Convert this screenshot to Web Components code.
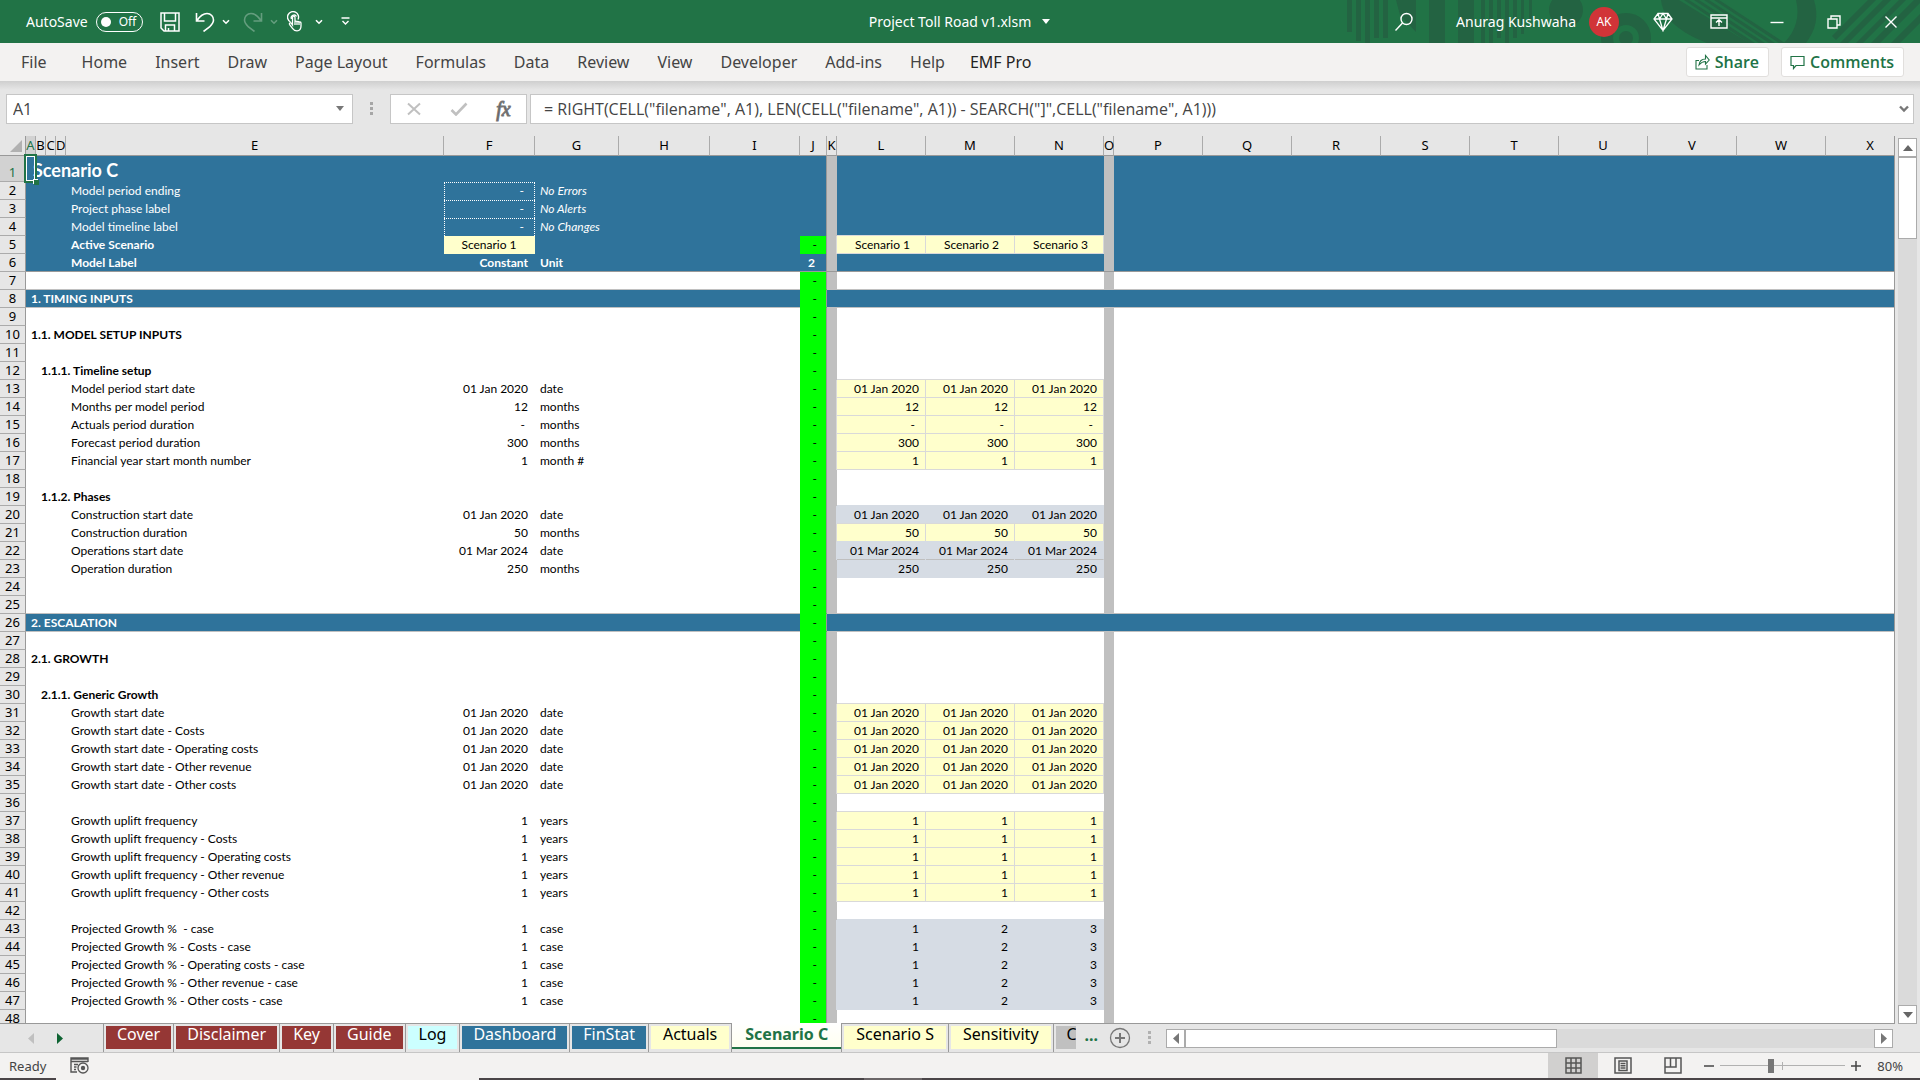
<!DOCTYPE html>
<html lang="en">
<head>
<meta charset="utf-8">
<title>Project Toll Road v1.xlsm</title>
<style>
  body {
    margin: 0;
    height: 100vh;
    display: flex;
    flex-direction: column;
    overflow: hidden;
    background: #e6e6e6;
    color: #444;
    font-family: "Noto Sans", "Open Sans", sans-serif;
    font-size: 16px;
  }
  xl-grid { flex: 1; min-height: 0; }
</style>
</head>
<body>
  <xl-title-bar user="Anurag Kushwaha" initials="AK">Project Toll Road v1.xlsm</xl-title-bar>

  <xl-ribbon>
    <xl-ribbon-tab class="file">File</xl-ribbon-tab>
    <xl-ribbon-tab>Home</xl-ribbon-tab>
    <xl-ribbon-tab>Insert</xl-ribbon-tab>
    <xl-ribbon-tab>Draw</xl-ribbon-tab>
    <xl-ribbon-tab>Page Layout</xl-ribbon-tab>
    <xl-ribbon-tab>Formulas</xl-ribbon-tab>
    <xl-ribbon-tab>Data</xl-ribbon-tab>
    <xl-ribbon-tab>Review</xl-ribbon-tab>
    <xl-ribbon-tab>View</xl-ribbon-tab>
    <xl-ribbon-tab>Developer</xl-ribbon-tab>
    <xl-ribbon-tab>Add-ins</xl-ribbon-tab>
    <xl-ribbon-tab>Help</xl-ribbon-tab>
    <xl-ribbon-tab addin>EMF Pro</xl-ribbon-tab>
    <xl-action slot="actions" icon="share">Share</xl-action>
    <xl-action slot="actions" icon="comment">Comments</xl-action>
  </xl-ribbon>

  <xl-formula-bar></xl-formula-bar>
  <xl-grid></xl-grid>

  <xl-sheet-tabs>
    <xl-sheet-tab tone="red">Cover</xl-sheet-tab>
    <xl-sheet-tab tone="red">Disclaimer</xl-sheet-tab>
    <xl-sheet-tab tone="red">Key</xl-sheet-tab>
    <xl-sheet-tab tone="red">Guide</xl-sheet-tab>
    <xl-sheet-tab tone="cyan">Log</xl-sheet-tab>
    <xl-sheet-tab tone="blue">Dashboard</xl-sheet-tab>
    <xl-sheet-tab tone="blue">FinStat</xl-sheet-tab>
    <xl-sheet-tab tone="yellow">Actuals</xl-sheet-tab>
    <xl-sheet-tab active>Scenario C</xl-sheet-tab>
    <xl-sheet-tab tone="yellow">Scenario S</xl-sheet-tab>
    <xl-sheet-tab tone="yellow">Sensitivity</xl-sheet-tab>
    <xl-sheet-tab tone="grey" cut>C</xl-sheet-tab>
  </xl-sheet-tabs>

  <xl-status-bar>Ready</xl-status-bar>

<script>
  // width, height, markup
  const ICONS = {
    save: [20, 20, '<path d="M1 1h18v18H4l-3-3zM4.500 1v8h11V1M5.500 19v-6h9v6M8.500 16v3" stroke-width="1.500"/>'],
    undo: [20, 20, '<path d="M1.500 1v8h8M2 8.500C5 4 8 1.500 12 1.500c4 0 6.500 3 6.500 6.500 0 3-2 5-4 7L8.500 19.500" stroke-width="1.600"/>'],
    redo: [20, 20, '<path d="M18.500 1v8h-8M18 8.500C15 4 12 1.500 8 1.500 4 1.500 1.500 4.500 1.500 8c0 3 2 5 4 7l6 4.500" stroke-width="1.600"/>'],
    chevron: [8, 6, '<path d="M1 1.200l3 3 3-3" stroke-width="1.600"/>'],
    customize: [9, 9, '<path d="M.500 1h8M1.500 4l3 3 3-3" stroke-width="1.400"/>'],
    touch: [16, 21, '<path d="M3.500 11A5.500 5.500 0 1 1 11 8.500M4.500 8A2.800 2.800 0 0 1 9.500 5.500" stroke-width="1.400"/><path d="M5.500 14V6.500c0-1.800 2.500-1.800 2.500 0V11c0-1.300 2-1.300 2 0 0-1 2-1 2 .500 0-1 2-.800 2 .500V15c0 3-1.500 4.800-4 4.800-2.500 0-3.500-1-4.500-2.500l-3-4c-.500-1.200.700-2 1.700-1.200zM8 11v3M10 11v3M12 11.500v2.500" stroke-width="1.300"/>'],
    search: [20, 20, '<circle cx="12.500" cy="7" r="5.500" stroke-width="1.400"/><path d="M8.500 11L1.500 18.500" stroke-width="1.400"/>'],
    diamond: [20, 20, '<path d="M5 1.500h10l4 5.500-9 11.500L1 7zM1 7h18M5 1.500L6.500 7 10 18.500 13.500 7 15 1.500M6.500 7L10 1.500 13.500 7" stroke-width="1.300"/>'],
    display: [18, 15, '<path d="M1 1h16v13H1zM1 4h16M9 12V6M6 8.500L9 5.700l3 2.800" stroke-width="1.400"/>'],
    minimize: [14, 14, '<path d="M.500 7.500h13" stroke-width="1.400"/>'],
    restore: [14, 14, '<path d="M1 4h9v9H1zM4 4V1h9v9h-3" stroke-width="1.400"/>'],
    close: [14, 14, '<path d="M1.500 1.500l11 11M12.500 1.500l-11 11" stroke-width="1.400"/>'],
    share: [15, 16, '<path d="M4 6.500H1v8.500h11v-4M4 11c.500-4 3-6 6.500-6V1.500L14.200 6l-3.700 4V7.500C8 7.500 6 8.500 4 11z" stroke-width="1.100"/>'],
    comment: [15, 15, '<path d="M1 1.500h13v9H6L3.500 13.500v-3H1z" stroke-width="1.200"/>'],
    caret: [10, 6, '<path d="M1 0h8L5 5z" fill="currentColor" stroke="none"/>'],
    dots: [3, 14, '<path d="M0 0h3v3H0zM0 5h3v3H0zM0 10h3v3H0z" fill="currentColor" stroke="none"/>'],
    cancel: [16, 14, '<path d="M2 1.500l12 11M14 1.500L2 12.500" stroke-width="2"/>'],
    enter: [18, 14, '<path d="M1.500 8L6 12.500 16.500 1.500" stroke-width="2.600"/>'],
    expand: [10, 8, '<path d="M1 1.500L5 5.500l4-4" stroke-width="2.400"/>'],
    up: [10, 6, '<path d="M0 6h10L5 0z" fill="currentColor" stroke="none"/>'],
    down: [10, 6, '<path d="M0 0h10L5 6z" fill="currentColor" stroke="none"/>'],
    left: [6, 11, '<path d="M6 0v11L0 5.500z" fill="currentColor" stroke="none"/>'],
    right: [6, 11, '<path d="M0 0v11l6-5.500z" fill="currentColor" stroke="none"/>'],
    add: [22, 22, '<circle cx="11" cy="11" r="9.500" stroke-width="1.300"/><path d="M11 6v10M6 11h10" stroke-width="2"/>'],
    macro: [20, 17, '<path d="M18 5V1H1v14h6M1 4.500h17M1 2h17M4 7.500h4M4 10h2.500M4 12.500h2" stroke-width="1.400"/><circle cx="13" cy="11" r="5" stroke-width="1.300"/><circle cx="13" cy="11" r="2.200" fill="currentColor" stroke="none"/>'],
    normal: [17, 17, '<path d="M1 1h15v15H1zM6 1v15M11 1v15M1 6h15M1 11h15" stroke-width="1.500"/>'],
    layout: [18, 17, '<path d="M1 1h16v15H1zM5 4h8v9.500H5zM6.500 6.500h5M6.500 8.700h5M6.500 11h5" stroke-width="1.500"/>'],
    breaks: [18, 17, '<path d="M1 1h16v15H1zM6.500 1v9M1 10h11V1" stroke-width="1.500"/>'],
    minus: [10, 10, '<path d="M0 5h10" stroke-width="1.500"/>'],
    plus: [10, 10, '<path d="M0 5h10M5 0v10" stroke-width="1.500"/>']
  };

  class XlIcon extends HTMLElement {
    connectedCallback() {
      const [w, h, shape] = ICONS[this.getAttribute('name')];
      this.attachShadow({ mode: 'open' });
      this.shadowRoot.innerHTML = `
        <style>
          :host { display: inline-flex; flex: none; }
          svg { display: block; fill: none; stroke: currentColor; }
        </style>
        <svg width="${w}" height="${h}" viewBox="0 0 ${w} ${h}" aria-hidden="true">${shape}</svg>
      `;
    }
  }

  class XlTitleBar extends HTMLElement {
    connectedCallback() {
      this.attachShadow({ mode: 'open' });
      this.shadowRoot.innerHTML = `
        <style>
          :host {
            display: grid;
            grid-template-columns: 1fr auto 1fr;
            align-items: center;
            position: relative;
            height: 43px;
            background: #217346;
            color: #fff;
            font-size: 14px;
          }
          button {
            display: flex;
            align-items: center;
            justify-content: center;
            padding: 0;
            border: 0;
            background: none;
            color: inherit;
            font: inherit;
          }
          .art { position: absolute; right: 0; top: 0; height: 43px; }
          .quick, .account, .doc { display: flex; align-items: center; position: relative; }
          .quick { padding-left: 26px; }
          .switch { display: flex; align-items: center; gap: 8px; }
          .pill {
            box-sizing: border-box;
            display: flex;
            align-items: center;
            gap: 8px;
            width: 47px;
            height: 20px;
            padding-left: 4px;
            border: 1px solid #fff;
            border-radius: 10px;
            font-size: 12px;
          }
          .pill::before { content: ''; width: 10px; height: 10px; border-radius: 50%; background: #fff; }
          .save { margin: 0 15px 0 17px; }
          .history { gap: 7px; margin-right: 13px; }
          .touch { gap: 12px; margin: 0 18px 0 -4px; }
          .off { opacity: .3; }
          .doc { gap: 10px; }
          .account { justify-content: flex-end; padding-right: 1px; }
          .avatar {
            width: 30px;
            line-height: 30px;
            margin: 0 34px 0 13px;
            border-radius: 50%;
            background: #d13438;
            font-size: 12px;
            text-align: center;
          }
          .search { margin-right: 42px; }
          .gem { margin-right: 37px; }
          .display { margin-right: 20px; }
          .window { width: 57px; }
        </style>
        <svg class="art" width="580" height="43" viewBox="0 0 580 43" fill="#236342" aria-hidden="true">
          <path d="M7 0h5v32H7zM16 0h5v41h-5zM25 0h5v43h-5zM34 0h5v38h-5zM43 0h5v38h-5zM56 0h20v32L60 15zM89 0h16v43H89zM118 0h16v43h-16zM141 0h4v43h-4zM149 0h4v43h-4zM157 0h4v38h-4zM165 0h4v43h-4zM173 0h4v38h-4zM181 0h3v34h-3zM189 0h3v20h-3z"/>
          <circle cx="226" cy="10" r="17"/>
          <circle cx="286" cy="38" r="19" fill="none" stroke="#236342" stroke-width="12"/>
          <circle cx="286" cy="38" r="7"/>
          <path d="M321 0h18l70 43h-42c-26-10-44-24-46-43z"/>
          <path d="M344 0h5l66 43h-6zM354 0h5l66 43h-6zM364 0h5l66 43h-6zM374 0h5l66 43h-6z"/>
          <path d="M456 0h18c5 16 2 30-8 43h-22c12-12 16-27 12-43zM492 36L528 0h8l-40 40zM500 43L543 0h8l-43 43zM516 43L559 0h7l-43 43zM531 43L574 0h6v3l-40 40zM551 43l29-29v9l-20 20z"/>
        </svg>
        <div class="quick">
          <button class="switch" role="switch" aria-checked="false">AutoSave <span class="pill">Off</span></button>
          <button class="save" aria-label="Save"><xl-icon name="save"></xl-icon></button>
          <button class="history" aria-label="Undo"><xl-icon name="undo"></xl-icon><xl-icon name="chevron"></xl-icon></button>
          <button class="history off" aria-label="Redo"><xl-icon name="redo"></xl-icon><xl-icon name="chevron"></xl-icon></button>
          <button class="touch" aria-label="Touch mode"><xl-icon name="touch"></xl-icon><xl-icon name="chevron"></xl-icon></button>
          <button aria-label="Customize toolbar"><xl-icon name="customize"></xl-icon></button>
        </div>
        <button class="doc"><slot></slot><xl-icon name="caret"></xl-icon></button>
        <div class="account">
          <button class="search" aria-label="Search"><xl-icon name="search"></xl-icon></button>
          <span>${this.getAttribute('user')}</span>
          <span class="avatar">${this.getAttribute('initials')}</span>
          <button class="gem" aria-label="Premium"><xl-icon name="diamond"></xl-icon></button>
          <button class="display" aria-label="Ribbon display"><xl-icon name="display"></xl-icon></button>
          <button class="window" aria-label="Minimize"><xl-icon name="minimize"></xl-icon></button>
          <button class="window" aria-label="Restore"><xl-icon name="restore"></xl-icon></button>
          <button class="window" aria-label="Close"><xl-icon name="close"></xl-icon></button>
        </div>
      `;
    }
  }

  class XlRibbon extends HTMLElement {
    connectedCallback() {
      this.attachShadow({ mode: 'open' });
      this.shadowRoot.innerHTML = `
        <style>
          :host {
            display: flex;
            align-items: center;
            justify-content: space-between;
            height: 38px;
            padding: 0 16px 0 7px;
            background: #f3f2f1;
          }
          nav, .actions { display: flex; }
          .actions { gap: 12px; }
        </style>
        <nav><slot></slot></nav>
        <div class="actions"><slot name="actions"></slot></div>
      `;
    }
  }

  class XlRibbonTab extends HTMLElement {
    connectedCallback() {
      this.attachShadow({ mode: 'open' });
      this.shadowRoot.innerHTML = `
        <style>
          :host { display: block; }
          :host(.file) { margin-right: 7px; }
          :host([addin]) { color: #222; }
          button {
            padding: 0 14px;
            border: 0;
            background: none;
            color: inherit;
            font: inherit;
            line-height: 24px;
            white-space: nowrap;
          }
          :host([addin]) button { padding: 0 11px; }
        </style>
        <button><slot></slot></button>
      `;
    }
  }

  class XlAction extends HTMLElement {
    connectedCallback() {
      this.attachShadow({ mode: 'open' });
      this.shadowRoot.innerHTML = `
        <style>
          :host { display: block; }
          button {
            display: flex;
            align-items: center;
            gap: 5px;
            box-sizing: border-box;
            height: 30px;
            padding: 0 9px 0 8px;
            border: 1px solid #e1dfdd;
            border-radius: 3px;
            background: #fff;
            color: #217346;
            font: 600 16px "Open Sans", "Noto Sans", sans-serif;
          }
        </style>
        <button><xl-icon name="${this.getAttribute('icon')}"></xl-icon><slot></slot></button>
      `;
    }
  }

  class XlFormulaBar extends HTMLElement {
    connectedCallback() {
      this.attachShadow({ mode: 'open' });
      this.shadowRoot.innerHTML = `
        <style>
          :host {
            display: flex;
            padding: 13px 6px 12px;
            background: linear-gradient(#cfcfcf, #e6e6e6 9px);
            color: #444;
            font: 16px "Open Sans", "Noto Sans", sans-serif;
          }
          .box {
            display: flex;
            align-items: center;
            box-sizing: border-box;
            height: 30px;
            border: 1px solid #c6c6c6;
            background: #fff;
          }
          input {
            flex: 1;
            min-width: 0;
            padding: 0;
            border: 0;
            outline: 0;
            background: none;
            color: inherit;
            font: inherit;
          }
          button { display: flex; justify-content: center; padding: 0; border: 0; background: none; color: #777; }
          .name { width: 347px; padding: 0 7px 0 6px; }
          .grip { display: flex; align-items: center; justify-content: center; width: 37px; color: #a6a6a6; }
          .edit { width: 137px; margin-right: 3px; }
          .edit button { flex: 1; color: #c0c0c0; }
          .edit .fx { color: #555; font: italic 20px/24px "Liberation Serif", serif; -webkit-text-stroke: 1px #777; }
          .formula { flex: 1; padding: 0 4px 0 13px; }
        </style>
        <div class="box name">
          <input aria-label="Name box" value="A1">
          <button aria-label="Names"><xl-icon name="caret"></xl-icon></button>
        </div>
        <span class="grip"><xl-icon name="dots"></xl-icon></span>
        <div class="box edit">
          <button aria-label="Cancel"><xl-icon name="cancel"></xl-icon></button>
          <button aria-label="Enter"><xl-icon name="enter"></xl-icon></button>
          <button class="fx">fx</button>
        </div>
        <div class="box formula">
          <input aria-label="Formula" value='= RIGHT(CELL("filename", A1), LEN(CELL("filename", A1)) - SEARCH("]",CELL("filename", A1)))'>
          <button aria-label="Expand"><xl-icon name="expand"></xl-icon></button>
        </div>
      `;
    }
  }

  // the last column takes the width that is left
  const COLUMNS = [
    ['A', 10], ['B', 10], ['C', 10], ['D', 10], ['E', 378], ['F', 91], ['G', 84], ['H', 91],
    ['I', 90], ['J', 27], ['K', 10], ['L', 89], ['M', 89], ['N', 89], ['O', 10], ['P', 89],
    ['Q', 89], ['R', 89], ['S', 89], ['T', 89], ['U', 89], ['V', 89], ['W', 89], ['X', '']
  ];

  const same = value => [value, value, value];
  const input = (label, value, unit) => ({ label, value, unit, cases: same(value), tone: 'input' });
  const calc = (label, value, unit, cases = same(value)) => ({ label, value, unit, cases, tone: 'calc' });
  const heading = (label, kind) => ({ label, kind });
  const blank = {};

  const ROWS = [
    { label: 'Scenario C', kind: 'top title' },
    { label: 'Model period ending', value: '-', unit: 'No Errors', kind: 'top check' },
    { label: 'Project phase label', value: '-', unit: 'No Alerts', kind: 'top check' },
    { label: 'Model timeline label', value: '-', unit: 'No Changes', kind: 'top check' },
    { label: 'Active Scenario', value: 'Scenario 1', flag: '-', cases: ['Scenario 1', 'Scenario 2', 'Scenario 3'], tone: 'input', kind: 'top active' },
    { label: 'Model Label', value: 'Constant', unit: 'Unit', flag: '2', kind: 'top last' },
    { kind: 'before' },
    heading('1. TIMING INPUTS', 'section'),
    blank,
    heading('1.1. MODEL SETUP INPUTS', 'h1'),
    blank,
    heading('1.1.1. Timeline setup', 'h2'),
    input('Model period start date', '01 Jan 2020', 'date'),
    input('Months per model period', '12', 'months'),
    input('Actuals period duration', '-', 'months'),
    input('Forecast period duration', '300', 'months'),
    input('Financial year start month number', '1', 'month #'),
    blank,
    heading('1.1.2. Phases', 'h2'),
    calc('Construction start date', '01 Jan 2020', 'date'),
    input('Construction duration', '50', 'months'),
    { ...calc('Operations start date', '01 Mar 2024', 'date'), kind: 'ruled' },
    calc('Operation duration', '250', 'months'),
    blank,
    { kind: 'before' },
    heading('2. ESCALATION', 'section'),
    blank,
    heading('2.1. GROWTH', 'h1'),
    blank,
    heading('2.1.1. Generic Growth', 'h2'),
    input('Growth start date', '01 Jan 2020', 'date'),
    input('Growth start date - Costs', '01 Jan 2020', 'date'),
    input('Growth start date - Operating costs', '01 Jan 2020', 'date'),
    input('Growth start date - Other revenue', '01 Jan 2020', 'date'),
    input('Growth start date - Other costs', '01 Jan 2020', 'date'),
    blank,
    input('Growth uplift frequency', '1', 'years'),
    input('Growth uplift frequency - Costs', '1', 'years'),
    input('Growth uplift frequency - Operating costs', '1', 'years'),
    input('Growth uplift frequency - Other revenue', '1', 'years'),
    input('Growth uplift frequency - Other costs', '1', 'years'),
    blank,
    calc('Projected Growth %  - case', '1', 'case', ['1', '2', '3']),
    calc('Projected Growth % - Costs - case', '1', 'case', ['1', '2', '3']),
    calc('Projected Growth % - Operating costs - case', '1', 'case', ['1', '2', '3']),
    calc('Projected Growth % - Other revenue - case', '1', 'case', ['1', '2', '3']),
    calc('Projected Growth % - Other costs - case', '1', 'case', ['1', '2', '3']),
    blank
  ];

  class XlGrid extends HTMLElement {
    connectedCallback() {
      this.attachShadow({ mode: 'open' });
      this.shadowRoot.innerHTML = `
        <style>
          :host { display: flex; color: #000; }
          .sheet {
            flex: 1;
            min-width: 0;
            overflow: hidden;
            box-sizing: border-box;
            border: solid #999;
            border-width: 0 1px 1px 0;
          }
          table {
            width: 100%;
            table-layout: fixed;
            border-collapse: separate;
            border-spacing: 0;
            background: #fff;
            font: 12px/16px Lato, "Noto Sans", sans-serif;
          }
          th, td {
            box-sizing: border-box;
            height: 18px;
            padding: 1px 6px 0;
            font-weight: 400;
            text-align: left;
            vertical-align: top;
            white-space: pre;
          }
          thead th, .num {
            padding: 0;
            background: #e6e6e6;
            color: #000;
            font: 13px/17px "Noto Sans", sans-serif;
            text-align: center;
            vertical-align: middle;
          }
          thead th {
            height: 20px;
            border-right: 1px solid #ababab;
            border-bottom: 1px solid #999;
          }
          thead th:first-child { border-right-color: #999; }
          thead th:last-child { padding-left: 20px; border-right: 0; }
          thead svg { display: block; margin-left: 10px; }
          .num { border-right: 1px solid #999; border-bottom: 1px solid #ababab; }
          thead th.current, .title .num { background: #d2d2d2; color: #217346; }
          .label { padding-left: 45px; }
          .unit { padding-left: 5px; }
          .value { padding-right: 7px; }
          .value, .case { text-align: right; }
          .dash { padding-right: 10px; }
          .flag { padding: 1px 9px 0 0; border-right: 1px solid #999; background: #0f0; text-align: right; }
          .gap { padding: 0; background: #c0c0c0; }
          .input, .calc {
            border: solid #d9d9d9;
            border-width: 0 1px 1px 0;
            box-shadow: 0 -1px #d9d9d9, -1px 0 #d9d9d9;
          }
          .input { background: #ffc; }
          .calc { background: #d6dce4; border-color: #d6dce4; box-shadow: 0 -1px #d6dce4, -1px 0 #d6dce4; }
          .ruled .calc { border-bottom-color: #bfbfbf; }
          .ruled + tr .calc { box-shadow: none; }

          .top { background: #2f739b; color: #fff; }
          .top .flag { background: none; }
          .top .case { color: #000; text-align: center; }
          .title .label {
            position: relative;
            height: 26px;
            padding: 2px 0 0 7px;
            font-size: 18px;
            font-weight: 700;
            line-height: 24px;
          }
          .title .num { height: 26px; padding-top: 7px; }
          .check .value { padding-top: 0; border: 1px dotted #fff; border-bottom-width: 0; }
          .check .unit { font-style: italic; }
          .active .value { background: #ffc; color: #000; text-align: center; }
          .active .case { padding-left: 9px; }
          .active .label { font-weight: 700; }
          .active .flag { background: #0f0; color: #000; }
          .last td, .last .label { border-bottom: 1px solid #999; font-weight: 700; }
          .last .flag { padding-right: 11px; }
          .before td, .before .label { border-bottom: 1px solid #c0c0c0; }
          .section .label, .h1 .label { padding-left: 5px; font-weight: 700; }
          .h2 .label { padding-left: 15px; font-weight: 700; }
          .section { background: #2f739b; }
          .section .label { color: #fff; }
          .section .gap { background: none; }
          .section td, .section .label { border-bottom: 1px solid #c0c0c0; }
          .before .flag, .section .flag { border-bottom-color: #0f0; }

          /* selected cell, drawn over the sheet */
          .cursor {
            position: absolute;
            left: -2px;
            top: -2px;
            width: 7px;
            height: 23px;
            border: 2px solid #217346;
            outline: 1px solid #fff;
            outline-offset: -3px;
            padding: 1px;
          }
          .cursor::after {
            content: '';
            position: absolute;
            right: -4px;
            bottom: -4px;
            width: 5px;
            height: 5px;
            background: #217346;
            box-shadow: -1px -1px #fff;
          }

          .scroll { display: flex; flex-direction: column; width: 19px; margin: 2px 3px 0; background: #dadada; }
          .scroll button, .thumb { box-sizing: border-box; border: 1px solid #ababab; background: #fff; }
          .scroll button { display: grid; place-items: center; height: 19px; padding: 0; color: #666; }
          .thumb { height: 82px; }
          .rest { flex: 1; }
        </style>
        <div class="sheet">
          <table aria-label="Scenario C">
            <colgroup><col style="width: 26px"></colgroup>
            <thead><tr>
              <th><svg width="12" height="12" viewBox="0 0 12 12" aria-hidden="true"><path d="M12 0v12H0z" fill="#b1b1b1"/></svg></th>
            </tr></thead>
            <tbody></tbody>
          </table>
        </div>
        <div class="scroll">
          <button aria-label="Scroll up"><xl-icon name="up"></xl-icon></button>
          <div class="thumb"></div>
          <div class="rest"></div>
          <button aria-label="Scroll down"><xl-icon name="down"></xl-icon></button>
        </div>
      `;

      const cols = this.shadowRoot.querySelector('colgroup');
      const head = this.shadowRoot.querySelector('thead tr');
      COLUMNS.forEach(([name, width]) => {
        cols.insertAdjacentHTML('beforeend', `<col${width ? ` style="width: ${width}px"` : ''}>`);
        head.insertAdjacentHTML('beforeend', `<th scope="col"${name === 'A' ? ' class="current"' : ''}>${name}</th>`);
      });
      this.shadowRoot.querySelector('tbody').innerHTML = ROWS.map((row, i) => this.renderRow(row, i)).join('');
    }

    renderRow(row, i) {
      const { label = '', value = '', unit = '', cases = ['', '', ''], tone = '', kind = '' } = row;
      const flag = row.flag || (i > 5 ? '-' : '');
      const dash = text => (text === '-' ? ' dash' : '');
      return `
        <tr class="${kind}">
          <th class="num" scope="row">${i + 1}</th>
          <th class="label" colspan="5">${label}${i === 0 ? '<span class="cursor"></span>' : ''}</th>
          <td class="value${dash(value)}">${value}</td>
          <td class="unit">${unit}</td>
          <td></td><td></td>
          <td class="flag">${flag}</td>
          <td class="gap"></td>
          ${cases.map(text => `<td class="case ${tone}${dash(text)}">${text}</td>`).join('')}
          <td class="gap"></td>
          ${'<td></td>'.repeat(9)}
        </tr>`;
    }
  }

  class XlSheetTabs extends HTMLElement {
    connectedCallback() {
      this.attachShadow({ mode: 'open' });
      this.shadowRoot.innerHTML = `
        <style>
          :host {
            display: flex;
            align-items: center;
            height: 28px;
            padding-right: 27px;
            border-bottom: 1px solid #c6c6c6;
            background: #e6e6e6;
          }
          button {
            display: grid;
            place-items: center;
            padding: 0;
            border: 0;
            background: none;
            color: #777;
          }
          .nav { display: flex; gap: 23px; width: 75px; padding-left: 28px; color: #0e6332; }
          .nav button { color: inherit; }
          .nav button:first-child { color: #c0c0c0; }
          .tabs { display: flex; align-self: stretch; }
          .more { margin: 0 11px 0 7px; padding-bottom: 7px; color: #217346; font: 700 16px/16px "Noto Sans", sans-serif; }
          .grip { display: flex; margin: 0 15px 0 17px; color: #b1b1b1; }
          .scroll { display: flex; flex: 1; height: 19px; background: #dadada; }
          .scroll button, .thumb { box-sizing: border-box; border: 1px solid #ababab; background: #fff; }
          .scroll button { width: 19px; }
          .track { flex: 1; }
          .thumb { width: 54%; height: 19px; }
        </style>
        <div class="nav">
          <button aria-label="Previous sheet"><xl-icon name="left"></xl-icon></button>
          <button aria-label="Next sheet"><xl-icon name="right"></xl-icon></button>
        </div>
        <div class="tabs"><slot></slot></div>
        <button class="more" aria-label="More sheets">...</button>
        <button aria-label="New sheet"><xl-icon name="add"></xl-icon></button>
        <span class="grip"><xl-icon name="dots"></xl-icon></span>
        <div class="scroll">
          <button aria-label="Scroll left"><xl-icon name="left"></xl-icon></button>
          <div class="track"><div class="thumb"></div></div>
          <button aria-label="Scroll right"><xl-icon name="right"></xl-icon></button>
        </div>
      `;
    }
  }

  class XlSheetTab extends HTMLElement {
    connectedCallback() {
      this.attachShadow({ mode: 'open' });
      this.shadowRoot.innerHTML = `
        <style>
          :host {
            display: block;
            padding: 2px 2px 0;
            border-left: 1px solid #999;
            color: #000;
          }
          button {
            display: block;
            height: 23px;
            padding: 0 11px 7px;
            border: 0;
            background: var(--tone);
            color: inherit;
            font: 16px/16px "Noto Sans", sans-serif;
            white-space: nowrap;
          }
          :host([tone="red"]) { --tone: #953735; color: #fff; }
          :host([tone="blue"]) { --tone: #2f739b; color: #fff; }
          :host([tone="cyan"]) { --tone: #cff; }
          :host([tone="yellow"]) { --tone: #ffc; }
          :host([tone="grey"]) { --tone: #c0c0c0; }
          :host([tone="yellow"]) button { padding: 0 12px 7px; }
          :host([cut]) button { width: 20px; padding-right: 0; overflow: hidden; }
          :host([active]) { padding: 0; margin: -1px -1px 0 0; border-right: 1px solid #999; color: #217346; }
          :host([active]) button {
            height: 26px;
            padding: 3px 13px 5px;
            border-bottom: 2px solid #217346;
            background: linear-gradient(#fff, #fffff0);
            font-weight: 700;
          }
        </style>
        <button><slot></slot></button>
      `;
    }
  }

  class XlStatusBar extends HTMLElement {
    connectedCallback() {
      this.attachShadow({ mode: 'open' });
      this.shadowRoot.innerHTML = `
        <style>
          :host {
            display: flex;
            align-items: center;
            height: 25px;
            padding: 0 17px 0 9px;
            border-bottom: 2px solid;
            border-image: linear-gradient(90deg, #4a4548 3%, #f3f2f1 3% 25%, #4a4548 25% 45%, #6b6668 45% 48%, #4a4548 48%) 2;
            background: #f3f2f1;
            font-size: 13px;
          }
          button {
            display: grid;
            place-items: center;
            height: 25px;
            padding: 0;
            border: 0;
            background: none;
            color: #555;
          }
          .macro { margin: 0 auto 0 24px; }
          .view { width: 50px; }
          .view.on { background: #d1d0cf; }
          .step { width: 10px; color: #444; }
          .out { margin-left: 6px; }
          input {
            appearance: none;
            width: 125px;
            height: 14px;
            margin: 0 6px;
            background:
              linear-gradient(#b1b1b1, #b1b1b1) 50% 50% / 1px 8px no-repeat,
              linear-gradient(#b1b1b1, #b1b1b1) 0 50% / 100% 1px no-repeat;
          }
          input::-webkit-slider-thumb { appearance: none; width: 6px; height: 14px; background: #777; }
          output { margin-left: 16px; }
        </style>
        <slot></slot>
        <button class="macro" aria-label="Record macro"><xl-icon name="macro"></xl-icon></button>
        <button class="view on" aria-label="Normal"><xl-icon name="normal"></xl-icon></button>
        <button class="view" aria-label="Page layout"><xl-icon name="layout"></xl-icon></button>
        <button class="view" aria-label="Page break preview"><xl-icon name="breaks"></xl-icon></button>
        <button class="step out" aria-label="Zoom out"><xl-icon name="minus"></xl-icon></button>
        <input type="range" aria-label="Zoom" min="0" max="200" value="80">
        <button class="step" aria-label="Zoom in"><xl-icon name="plus"></xl-icon></button>
        <output>80%</output>
      `;
    }
  }

  customElements.define('xl-icon', XlIcon);
  customElements.define('xl-title-bar', XlTitleBar);
  customElements.define('xl-ribbon', XlRibbon);
  customElements.define('xl-ribbon-tab', XlRibbonTab);
  customElements.define('xl-action', XlAction);
  customElements.define('xl-formula-bar', XlFormulaBar);
  customElements.define('xl-grid', XlGrid);
  customElements.define('xl-sheet-tabs', XlSheetTabs);
  customElements.define('xl-sheet-tab', XlSheetTab);
  customElements.define('xl-status-bar', XlStatusBar);
</script>
</body>
</html>
